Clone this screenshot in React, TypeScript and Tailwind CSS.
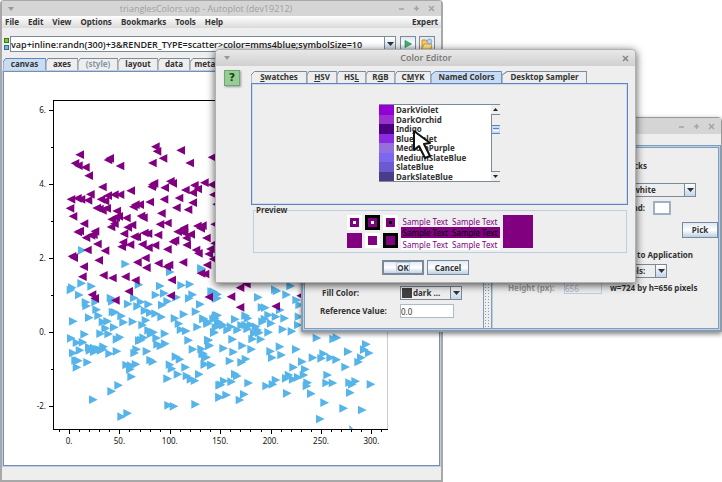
import React from "react";

const ARROW = "absolute right-0 top-0 bottom-0 w-3 flex items-center justify-center border border-[#7a8a99] bg-gradient-to-b from-white to-[#c3d6ea] pointer-events-none";
const BUTTON = "flex items-center justify-center border border-[#7a8a99] bg-gradient-to-b from-[#dde8f3] via-white to-[#b8cfe5]";

// Symbol centres, in thirds of a pixel, grouped by plot quadrant.
const BLUE = [
  { dx: 0, dy: 270, pts: [[244,481],[374,522],[602,535]] },
  { dx: 0, dy: 780, pts: [
    [508,36],[602,28],[242,70],[272,79],[210,90],[214,83],[235,105],[414,74],[478,78],[542,76],[567,73],
    [465,105],[490,100],[575,104],[255,127],[284,126],[257,138],[330,114],[334,124],[400,114],[382,132],[420,126],[410,139],[443,133],
    [484,135],[500,124],[527,112],[565,115],[598,133],[632,95],[645,104],[650,115],[287,149],[293,167],[265,173],[336,156],[343,157],[362,168],
    [432,152],[448,158],[464,161],[482,171],[549,163],[585,155],[522,175],[608,176],[643,175],[650,166],[217,184],[306,186],[320,184],
    [368,187],[396,185],[435,181],[425,195],[534,191],[314,205],[340,202],[540,209],[556,213],[590,201],[620,191],[645,202],[640,217],[655,190],
    [211,235],[251,223],[299,221],[323,222],[348,238],[357,232],[421,240],[428,233],[443,211],[450,222],[458,217],[467,234],[492,221],[563,241],
    [228,248],[246,247],[415,242],[470,253],[480,258],[493,251],[623,241],[626,257],[217,279],[237,271],[265,262],[267,271],[280,264],[280,275],[293,268],[300,271],[308,260],[306,268],
    [326,281],[348,274],[407,268],[401,279],[438,274],[576,268],[602,267],[608,282],[617,292],[525,290],[537,298],[224,301],[232,302],[228,322],[260,307],
    [449,300],[456,305],[377,315],[391,317],[388,328],[405,313],[507,314],[513,326],[554,322],[612,313],[631,316],[392,350],[500,356],[531,343],[558,348],[570,358],[582,362],[595,343],
    [353,376],[332,394],[277,419],[362,470],[380,460],[503,436],[519,439],[584,433],[656,376],[656,412]] },
  { dx: 600, dy: 780, pts: [
    [38,95],[45,115],[50,103],[172,112],[223,89],[228,93],[269,78],[257,104],[287,120],[296,135],[183,142],[193,143],[238,150],
    [8,177],[19,185],[45,167],[38,177],[52,185],[40,218],[60,192],[67,196],[80,210],[90,200],[103,178],[110,210],[122,196],[134,167],[141,175],
    [134,195],[140,207],[150,195],[165,200],[170,210],[175,218],[160,220],[185,185],[192,177],[203,165],[211,190],[225,170],[251,175],[294,170],[292,195],
    [203,217],[246,208],[273,214],[95,238],[155,237],[180,238],[348,234],[398,237],[408,233],[22,240],[25,256],[68,265],[98,276],[125,257],[152,268],
    [209,274],[214,293],[237,260],[242,285],[286,268],[5,280],[13,292],[12,313],[32,315],[87,303],[122,307],[135,297],[278,322],[304,305],[313,328],
    [336,293],[362,295],[368,281],[389,293],[407,299],[434,321],[442,275],[496,253],[490,269],[505,279],[481,293],[473,306],
    [103,342],[109,348],[60,374],[70,363],[92,365],[143,369],[56,412],[77,405],[117,420],[130,403],[197,378],[216,373],[225,360],[256,355],[264,345],[277,358],[292,352],[309,345],
    [259,400],[320,368],[318,378],[331,401],[371,428],[380,345],[377,369],[396,369],[446,368],[454,373],[464,364],[448,398],[428,445],[484,450],[358,477],[510,373]] },
];
const PURPLE = [
  { dx: 0, dy: 270, pts: [
    [240,194],[226,220],[236,227],[257,232],[267,257],[325,210],[330,205],[361,228],[467,170],[472,184],[490,205],[458,219],[543,181],[570,219],[637,202],
    [308,291],[393,302],[456,290],[463,280],[458,284],[495,293],[512,274],[519,280],[557,300],[584,286],[594,297],[579,308],[614,278],[636,284],[641,314],
    [214,328],[233,325],[244,328],[265,331],[272,313],[304,328],[316,333],[324,317],[344,314],[361,314],[450,336],[493,328],[538,324],[579,338],
    [211,355],[291,354],[299,357],[308,361],[321,355],[351,363],[401,350],[407,344],[420,344],[530,353],[565,359],[220,379],[253,401],[336,388],[348,382],[357,379],[380,384],[344,401],[334,411],
    [424,378],[431,383],[485,370],[481,403],[503,399],[384,412],[397,405],[234,426],[240,423],[259,443],[274,436],[286,424],[281,434],[373,431],[404,440],[411,441],[434,429],[445,431],[475,435],
    [534,425],[545,424],[553,414],[553,428],[560,444],[573,433],[593,408],[603,415],[608,407],[620,444],[645,403],[293,462],[263,480],[316,482],[370,457],[366,470],[391,464],[428,463],[446,473],[466,466],
    [503,478],[520,455],[526,451],[561,465],[589,480],[596,490],[632,477],[627,492],[217,499],[222,503],[297,511],[252,530],[413,517],[437,504],[440,533],[476,520],[501,530],[508,525],[550,517],[622,525],[640,507],[645,460],[651,343]] },
  { dx: 0, dy: 780, pts: [[248,50],[311,46],[338,54],[377,50],[407,61],[516,60],[277,104],[285,115],[347,121],[387,94],[513,107],[604,40],[616,42],[627,111]] },
  { dx: 600, dy: 780, pts: [[94,110],[121,83],[140,72],[121,142],[228,139],[303,107]] },
];

function Scatter() {
  const minorX: number[] = [];
  for (let i = -1; i <= 31; i++) minorX.push(69.5 + i * 10.08);
  return (
    <svg viewBox="4 72 434 393" className="block h-[393px] w-full" preserveAspectRatio="xMinYMin meet" role="img" aria-label="Scatter plot">
      <g transform="scale(0.33333)">
        {BLUE.flatMap((g) => g.pts.map(([x, y]) => (
          <path key={`b${g.dx + x}-${g.dy + y}`} fill="#56b4e9" d={`M${g.dx + x - 10} ${g.dy + y - 13}l26 13l-26 13z`} />
        )))}
        <path d="M1048 1286V1275L1060 1286Z" fill="#56b4e9" />
        {PURPLE.flatMap((g) => g.pts.map(([x, y]) => (
          <path key={`p${g.dx + x}-${g.dy + y}`} fill="#800080" d={`M${g.dx + x + 12} ${g.dy + y - 13}l-26 13l26 13z`} />
        )))}
      </g>
      <g stroke="#000" strokeWidth="1" fill="none" shapeRendering="crispEdges">
        <path d="M53.5 100V430M53 100.5H388M53 429.5H388" />
        <path d="M387.5 100V429" stroke="#ccc" />
        {[110, 184, 258, 332, 406].map((y) => <path key={y} d={`M49 ${y + 0.5}H53`} />)}
        {[147, 221, 295, 369].map((y) => <path key={y} d={`M51 ${y + 0.5}H53`} />)}
        {minorX.map((x, i) => <path key={i} d={`M${Math.floor(x) + 0.5} 430V${i % 5 === 1 ? 434 : 432}`} />)}
      </g>
      <g fontSize="8" fontWeight="400" fill="#111">
        {["6.", "4.", "2.", "0.", "-2."].map((t, i) => <text key={t} x="46" y={113 + i * 74} textAnchor="end">{t}</text>)}
        {["0.", "50.", "100.", "150.", "200.", "250.", "300."].map((t, i) => <text key={t} x={69 + i * 50.4} y="444" textAnchor="middle">{t}</text>)}
      </g>
    </svg>
  );
}

type TabProps = { label: string; hot?: number; active?: boolean; dim?: boolean; width: string };

function Tab({ label, hot = -1, active = false, dim = false, width }: TabProps) {
  return (
    <button role="tab" aria-selected={active} className={`relative flex h-full shrink-0 items-center justify-center whitespace-nowrap ${width} ${dim ? "text-[#8795a5]" : ""}`}>
      <svg className="absolute inset-0 h-full w-full" viewBox="0 0 100 12" preserveAspectRatio="none" aria-hidden="true">
        <path d="M0 12V4L6 0.5H99.5V12" fill={active ? "#c8ddf2" : "#eeeeee"} stroke={active ? "#6382bf" : "#7a8a99"} vectorEffect="non-scaling-stroke" />
      </svg>
      <span className="relative">
        {hot < 0 ? label : <>{label.slice(0, hot)}<u>{label[hot]}</u>{label.slice(hot + 1)}</>}
      </span>
    </button>
  );
}

const Chevron = () => <svg width="7" height="4" viewBox="0 0 7 4" aria-hidden="true"><path d="M0 0H7L3.5 4Z" fill="#333" /></svg>;

function Combo({ label, value, className }: { label: string; value: string; className: string }) {
  return (
    <span className={`relative block shrink-0 ${className}`}>
      <select aria-label={label} defaultValue={value} className="h-full w-full appearance-none border border-[#7a8a99] bg-[#eeeeee] pr-3 pl-3">
        <option>{value}</option>
      </select>
      <span className={ARROW}><Chevron /></span>
    </span>
  );
}

const GLYPHS: Record<string, string> = { Minimize: "M1 4H6", Maximize: "M1 3.5H6M3.5 1V6", Close: "M1 1L6 6M6 1L1 6" };

function WindowControls({ names = ["Minimize", "Maximize", "Close"], stroke = "#a4a4a4" }: { names?: string[]; stroke?: string }) {
  return (
    <div className="flex items-center gap-2">
      {names.map((n) => (
        <button key={n} aria-label={n}>
          <svg width="7" height="7" viewBox="0 0 7 7"><path d={GLYPHS[n]} fill="none" stroke={stroke} strokeWidth="1.5" /></svg>
        </button>
      ))}
    </div>
  );
}

const MenuMark = () => <svg width="6" height="4" viewBox="0 0 6 4" aria-hidden="true"><path d="M0 0H6L3 4Z" fill="#999" /></svg>;

function MainWindow() {
  return (
    <section className="absolute top-0 left-0 flex w-[443px] flex-col rounded-t border-x-2 border-t border-b-2 border-[#a8a8a8] bg-[#eeeeee]">
      <header className='flex h-[15px] items-center bg-[#d5d5d5] pr-1.5 pl-1.5 font-["Open_Sans",sans-serif] text-[9px] text-[#a0a0a0]'>
        <MenuMark />
        <h1 className="flex-1 text-center font-medium">trianglesColors.vap - Autoplot (dev19212)</h1>
        <WindowControls />
      </header>
      <nav className="flex h-3 items-center gap-[9px] bg-gradient-to-b from-white to-[#dadada] px-[3px]">
        {["File", "Edit", "View", "Options", "Bookmarks", "Tools", "Help"].map((m) => <button key={m}>{m}</button>)}
        <button className="ml-auto">Expert</button>
      </nav>
      <div className="mt-2 flex h-4 items-stretch">
        <span className="flex w-2 flex-col items-center justify-center gap-0.5">
          <i className="h-[5px] w-[5px] border border-[#3b7a12] bg-[#83c14b]" />
          <i className="h-[5px] w-[5px] border border-[#2e6d8e] bg-[#7db6dc]" />
        </span>
        <span className="relative block w-[386px]">
          <input aria-label="Data set address" defaultValue="vap+inline:randn(300)+3&RENDER_TYPE=scatter>color=mms4blue;symbolSize=10" className='h-full w-full border border-[#7a8a99] bg-white pr-3 font-["Open_Sans",sans-serif] text-[9px] font-semibold text-[#222]' />
          <span className={ARROW}><Chevron /></span>
        </span>
        <button aria-label="Plot" className={`${BUTTON} ml-1 w-4`}>
          <svg width="8" height="8" viewBox="0 0 8 8"><path d="M1 0.5L7.5 4L1 7.5Z" fill="#43b36d" stroke="#2d8553" strokeWidth=".7" /></svg>
        </button>
        <button aria-label="Open" className={`${BUTTON} ml-[3px] w-4`}>
          <svg width="12" height="12" viewBox="0 0 12 12"><path d="M1 2H5L6 3H10V11H1Z" fill="#f4cf68" stroke="#c88d20" /><path d="M1 11L3 6H11L9.5 11Z" fill="#ffe28e" stroke="#c88d20" strokeWidth=".7" /><circle cx="8.5" cy="3.5" r="2.5" fill="#b9d3ef" stroke="#6c94c4" strokeWidth=".7" /></svg>
        </button>
      </div>
      <div role="tablist" className="mt-[6px] ml-[1px] flex h-3">
        <Tab label="canvas" active width="w-[43px]" />
        <Tab label="axes" width="w-8" />
        <Tab label="(style)" dim width="w-10" />
        <Tab label="layout" width="w-10" />
        <Tab label="data" width="w-8" />
        <Tab label="metadata" width="w-12" />
      </div>
      <div className="border-2 border-[#b8cfe5] bg-white outline outline-[#7a8fb0] -outline-offset-2">
        <Scatter />
      </div>
      <footer className="h-[13px]" />
    </section>
  );
}

function PropertiesWindow() {
  return (
    <section className="absolute top-[117px] left-[301px] flex h-[215px] w-[421px] flex-col rounded-t border border-[#999] bg-[#eeeeee] shadow-[0_2px_5px_rgba(0,0,0,0.5)]">
      <header className="flex h-4 shrink-0 items-center justify-end bg-[#d5d5d5] pr-1.5"><WindowControls /></header>
      <div className="mt-[11px] flex flex-1 border border-[#7f9dbd]">
        <div className="flex flex-1 border-2 border-[#b8cfe5] outline outline-[#7f9dbd] -outline-offset-2">
          <div className="flex w-[178px] flex-col justify-end gap-1 pb-[10px] pl-[15px]">
            <div className="flex h-[14px] items-center">
              <span className="w-20 pl-0.5">Fill Color:</span>
              <span className="relative">
                <Combo label="Fill Color" value="dark ..." className="h-[14px] w-[62px]" />
                <i className="absolute top-0.5 left-0.5 h-[10px] w-[10px] bg-[#404040]" />
              </span>
            </div>
            <div className="flex h-[14px] items-center">
              <label htmlFor="ref" className="w-20 whitespace-nowrap">Reference Value:</label>
              <input id="ref" defaultValue="0.0" className="h-[14px] w-[54px] border border-[#b0bac5] bg-white font-normal" />
            </div>
          </div>
          <div className="w-[9px] border-x border-[#7f9dbd] bg-[radial-gradient(#999_1px,transparent_1px)] bg-[length:3px_3px]" />
          <div className="flex flex-1 flex-col border-l border-[#b8cfe5] pl-[15px]">
            <h2 className="mt-[13px] mr-[71px] self-end">Ticks</h2>
            <Combo label="Background color" value="white" className="mt-3 mr-[22px] h-[14px] w-[76px] self-end" />
            <div className="mt-1 mr-[47px] flex h-[14px] items-center gap-2 self-end">
              <label htmlFor="bg">Background:</label>
              <button id="bg" className="h-[14px] w-[18px] border-2 border-[#9db0c4] bg-white" />
            </div>
            <button className={`${BUTTON} mt-[7px] h-4 w-9 self-end`}>Pick</button>
            <h2 className="mt-3 mr-[25px] self-end">Resize to Application</h2>
            <Combo label="Size unit" value="Pixels:" className="mt-1 mr-[51px] h-[14px] w-[60px] self-end" />
            <div className="mt-1 flex h-3 items-center whitespace-nowrap">
              <label htmlFor="height" className="w-14 text-[#999]">Height (px):</label>
              <input id="height" disabled defaultValue="656" className="h-3 w-[38px] border border-[#b8cfe5] font-normal text-[#a9b5c4]" />
              <span className="pl-2">w=724 by h=656 pixels</span>
            </div>
          </div>
        </div>
      </div>
    </section>
  );
}

const COLORS = [
  ["DarkViolet", "bg-[#9400d3]"], ["DarkOrchid", "bg-[#9932cc]"], ["Indigo", "bg-[#4b0082]"], ["BlueViolet", "bg-[#8a2be2]"],
  ["MediumPurple", "bg-[#9370db]"], ["MediumSlateBlue", "bg-[#7b68ee]"], ["SlateBlue", "bg-[#6a5acd]"], ["DarkSlateBlue", "bg-[#483d8b]"],
];

function NamedColors() {
  return (
    <div className="flex h-[78px] w-[121px] border-y border-[#7a8a99] bg-white">
      <ul role="listbox" aria-label="Named colors" className="grid flex-1 grid-rows-8 leading-[9px]">
        {COLORS.map(([name, bg]) => (
          <li key={name} role="option" aria-selected={name === "Indigo"} className="flex min-h-0 items-center gap-0.5">
            <i className={`h-full w-[15px] ${bg}`} />{name}
          </li>
        ))}
      </ul>
      <div className="flex w-[9px] flex-col border-[#7a8a99] bg-[#eeeeee]">
        <button aria-label="Scroll up" className="flex h-[10px] items-center justify-center border-b border-[#7a8a99]"><svg width="5" height="3" viewBox="0 0 5 3"><path d="M0 3H5L2.5 0Z" fill="#222" /></svg></button>
        <div className="flex-1 border-l border-[#7a8a99] pt-[10px]">
          <div className="flex h-[9px] flex-col items-center justify-center gap-px border-y border-[#6382bf] bg-[#c8ddf2]"><i className="h-px w-1.5 bg-[#6382bf]" /><i className="h-px w-1.5 bg-white" /></div>
        </div>
        <button aria-label="Scroll down" className="flex h-[10px] items-center justify-center border-t border-[#7a8a99]"><svg width="5" height="3" viewBox="0 0 5 3"><path d="M0 0H5L2.5 3Z" fill="#222" /></svg></button>
      </div>
    </div>
  );
}

// Outer, ring and centre fill of each preview square.
const SWATCHES = [
  ["bg-white", "bg-[#800080]", "bg-white"], ["bg-black", "bg-[#800080]", "bg-white"], ["bg-white", "bg-[#800080]", "bg-black"],
  ["bg-[#800080]", "bg-[#800080]", "bg-[#800080]"], ["bg-white", "bg-[#800080]", "bg-[#800080]"], ["bg-black", "bg-[#800080]", "bg-[#800080]"],
];

function Preview() {
  return (
    <fieldset className="mt-px mr-2 ml-[37px] h-[47px] border border-[#b8cfe5]">
      <legend className="ml-[2px] leading-[8px]">Preview</legend>
      <div className="flex items-start justify-center pt-px pr-px">
        <div className="grid grid-cols-3 gap-[3px]">
          {SWATCHES.map(([a, b, c], i) => (
            <span key={i} className={`flex h-[15px] w-[15px] items-center justify-center ${a}`}>
              <span className={`flex h-[9px] w-[9px] items-center justify-center ${b}`}><i className={`h-[3px] w-[3px] ${c}`} /></span>
            </span>
          ))}
        </div>
        <div className="ml-[3px] w-[99px] leading-[11px] font-normal text-[#800080]">
          <p className="flex h-3 items-center justify-around">{["a", "b"].map((k) => <span key={k}>Sample Text</span>)}</p>
          <p className="flex h-[11px] items-center justify-around bg-[#800080] text-black">{["a", "b"].map((k) => <span key={k}>Sample Text</span>)}</p>
          <p className="flex h-3 items-center justify-around bg-white">{["a", "b"].map((k) => <span key={k}>Sample Text</span>)}</p>
        </div>
        <i className="ml-[3px] h-[33px] w-[30px] bg-[#800080]" />
      </div>
    </fieldset>
  );
}

function ColorEditor() {
  return (
    <section role="dialog" aria-label="Color Editor" className="absolute top-[49px] left-[215px] flex w-[421px] flex-col rounded-t border border-[#b0b0b0] bg-[#eeeeee] shadow-[0_2px_8px_rgba(0,0,0,0.7)]">
      <header className='flex h-4 items-center rounded-t bg-gradient-to-b from-[#e8e8e8] to-[#d0d0d0] pr-1.5 pl-2 font-["Open_Sans",sans-serif] text-[9px] text-[#777]'>
        <MenuMark />
        <h1 className="flex-1 text-center font-semibold">Color Editor</h1>
        <WindowControls names={["Close"]} stroke="#858585" />
      </header>
      <div className="mt-1 flex h-[135px] pr-[7px] pl-2">
        <button aria-label="Help" className="h-4 w-4 border border-[#6fa56f] bg-[#98cb98] font-['DejaVu_Sans'] text-[11px] leading-[14px] text-[#0a4a0a] shadow-[1px_1px_2px_#999]">?</button>
        <div className="ml-[11px] flex flex-1 flex-col pt-px">
          <div role="tablist" className="flex h-3">
            <Tab label="Swatches" hot={0} width="w-[56px]" />
            <Tab label="HSV" hot={0} width="w-[30px]" />
            <Tab label="HSL" hot={2} width="w-[29px]" />
            <Tab label="RGB" hot={1} width="w-[29px]" />
            <Tab label="CMYK" hot={1} width="w-9" />
            <Tab label="Named Colors" active width="w-[71px]" />
            <Tab label="Desktop Sampler" width="w-[85px]" />
          </div>
          <div className="flex flex-1 items-start justify-center border border-[#6382bf] pt-5 shadow-[inset_0_0_0_1px_#c8ddf2]">
            <NamedColors />
          </div>
        </div>
      </div>
      <Preview />
      <div className="mt-[7px] mb-[7px] flex justify-center gap-[3px]">
        <button className={`${BUTTON} h-[15px] w-[42px] outline outline-[#7a8a99] -outline-offset-2`}>
          <span className="border border-[#b8cfe5] leading-[9px]">OK</span>
        </button>
        <button className={`${BUTTON} h-[15px] w-[42px]`}>Cancel</button>
      </div>
    </section>
  );
}

export default function App() {
  return (
    <main className='relative min-h-screen w-full overflow-hidden bg-white font-["Noto_Sans",sans-serif] text-[8px] leading-[10px] font-bold text-[#333]'>
      <MainWindow />
      <PropertiesWindow />
      <ColorEditor />
      <svg className="absolute top-[129px] left-[412px]" width="22" height="32" viewBox="0 0 22 32" aria-hidden="true">
        <path d="M2 2L2 21L7 17L13 29L18 27L12 15L18 14Z" fill="#fff" stroke="#111" strokeWidth="2" strokeLinejoin="round" />
      </svg>
    </main>
  );
}
